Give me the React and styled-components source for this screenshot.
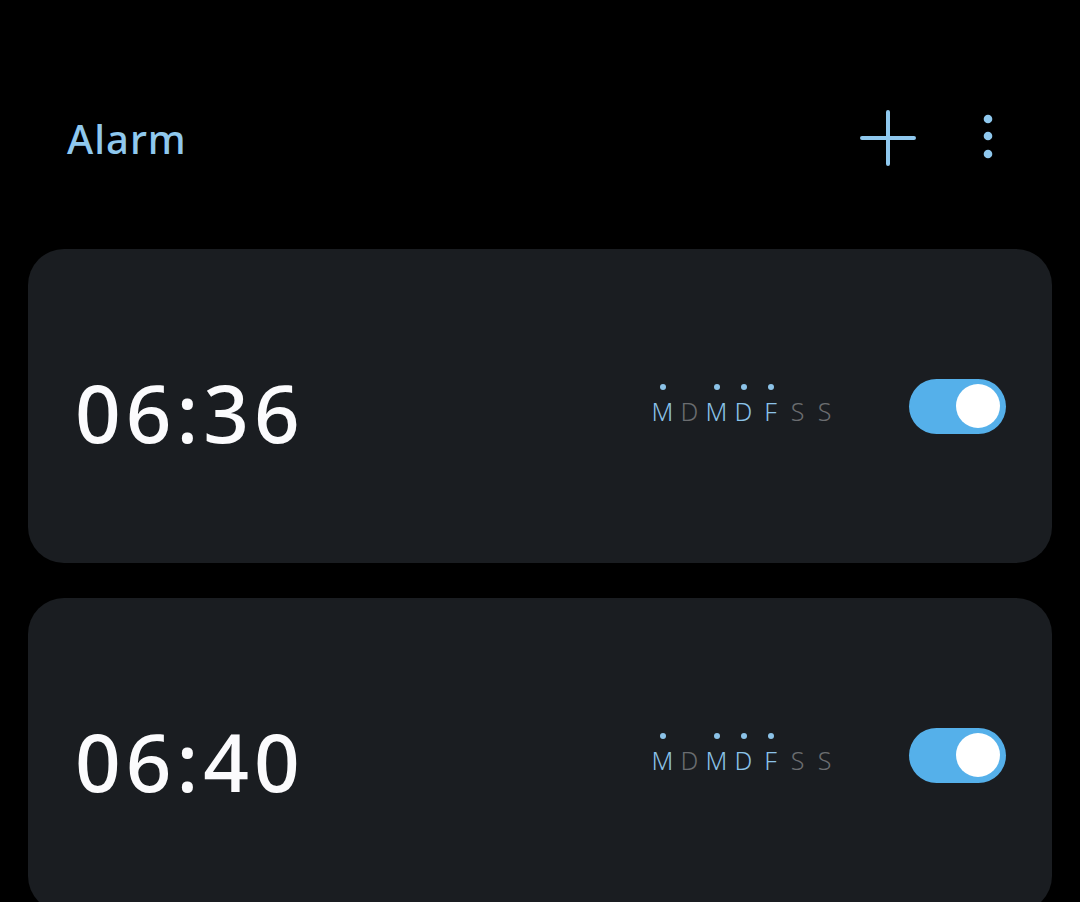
import React from "react";
import styled, { createGlobalStyle } from "styled-components";

const GlobalStyle = createGlobalStyle`
  html, body {
    margin: 0;
    padding: 0;
    background: #000;
  }
  body {
    font-family: "Noto Sans", "Open Sans", sans-serif;
    color: #fff;
  }
`;

const alarms = [
  { time: "06:36", active: [true, false, true, true, true, false, false] },
  { time: "06:40", active: [true, false, true, true, true, false, false] },
];

const dayLetters = ["M", "D", "M", "D", "F", "S", "S"];

const App = () => {
  return (
    <>
      <GlobalStyle />
      <Page>
        <Header>
          <Title>Alarm</Title>
          <Actions>
            <IconButton aria-label="add">
              <svg width="56" height="56" viewBox="0 0 56 56">
                <path
                  d="M28 2 V54 M2 28 H54"
                  stroke="#8fc8ee"
                  strokeWidth="4"
                  strokeLinecap="round"
                />
              </svg>
            </IconButton>
            <IconButton aria-label="more">
              <svg width="56" height="56" viewBox="0 0 56 56">
                <circle cx="28" cy="9" r="4.3" fill="#8fc8ee" />
                <circle cx="28" cy="26" r="4.3" fill="#8fc8ee" />
                <circle cx="28" cy="44" r="4.3" fill="#8fc8ee" />
              </svg>
            </IconButton>
          </Actions>
        </Header>
        <List>
          {alarms.map((a) => (
            <Card key={a.time}>
              <Time>{a.time}</Time>
              <Days>
                {dayLetters.map((d, i) => (
                  <Day key={i} $on={a.active[i]}>
                    <Dot $on={a.active[i]} />
                    {d}
                  </Day>
                ))}
              </Days>
              <Toggle>
                <Thumb />
              </Toggle>
            </Card>
          ))}
        </List>
      </Page>
    </>
  );
};

export default App;

const Page = styled.div`
  width: 1080px;
  height: 902px;
  overflow: hidden;
  padding: 0 28px;
  box-sizing: border-box;
`;

const Header = styled.header`
  height: 120px;
  margin: 78px 0 51px;
  padding: 0 36px 0 39px;
  display: flex;
  align-items: center;
  justify-content: space-between;
`;

const Title = styled.h1`
  margin: 0;
  font-size: 40px;
  font-weight: 500;
  color: #8fc8ee;
  letter-spacing: 1px;
`;

const Actions = styled.div`
  display: flex;
  gap: 44px;
`;

const IconButton = styled.button`
  width: 56px;
  height: 56px;
  padding: 0;
  border: none;
  background: none;
  display: flex;
  align-items: center;
  justify-content: center;
`;

const List = styled.div`
  display: flex;
  flex-direction: column;
  gap: 35px;
`;

const Card = styled.div`
  height: 314px;
  flex-shrink: 0;
  border-radius: 36px;
  background: #1a1d21;
  padding: 0 46px 0 47px;
  display: flex;
  align-items: center;
`;

const Time = styled.div`
  font-size: 80px;
  font-weight: 500;
  color: #fbfbfd;
  letter-spacing: 5px;
  margin-top: 10px;
  flex: 1;
`;

const Days = styled.div`
  display: flex;
  margin-right: 71px;
  margin-bottom: 4px;
`;

const Day = styled.div`
  width: 27px;
  display: flex;
  flex-direction: column;
  align-items: center;
  font-size: 25px;
  font-weight: 300;
  line-height: 26px;
  color: ${({ $on }) => ($on ? "#8cc3e8" : "#6b6d70")};
`;

const Dot = styled.span`
  width: 6px;
  height: 6px;
  border-radius: 50%;
  margin-bottom: 8px;
  background: ${({ $on }) => ($on ? "#8cc3e8" : "transparent")};
`;

const Toggle = styled.div`
  width: 97px;
  height: 55px;
  border-radius: 28px;
  background: #55b0ea;
  display: flex;
  align-items: center;
  justify-content: flex-end;
  padding-right: 6px;
  box-sizing: border-box;
`;

const Thumb = styled.span`
  width: 44px;
  height: 44px;
  border-radius: 50%;
  background: #fff;
`;
